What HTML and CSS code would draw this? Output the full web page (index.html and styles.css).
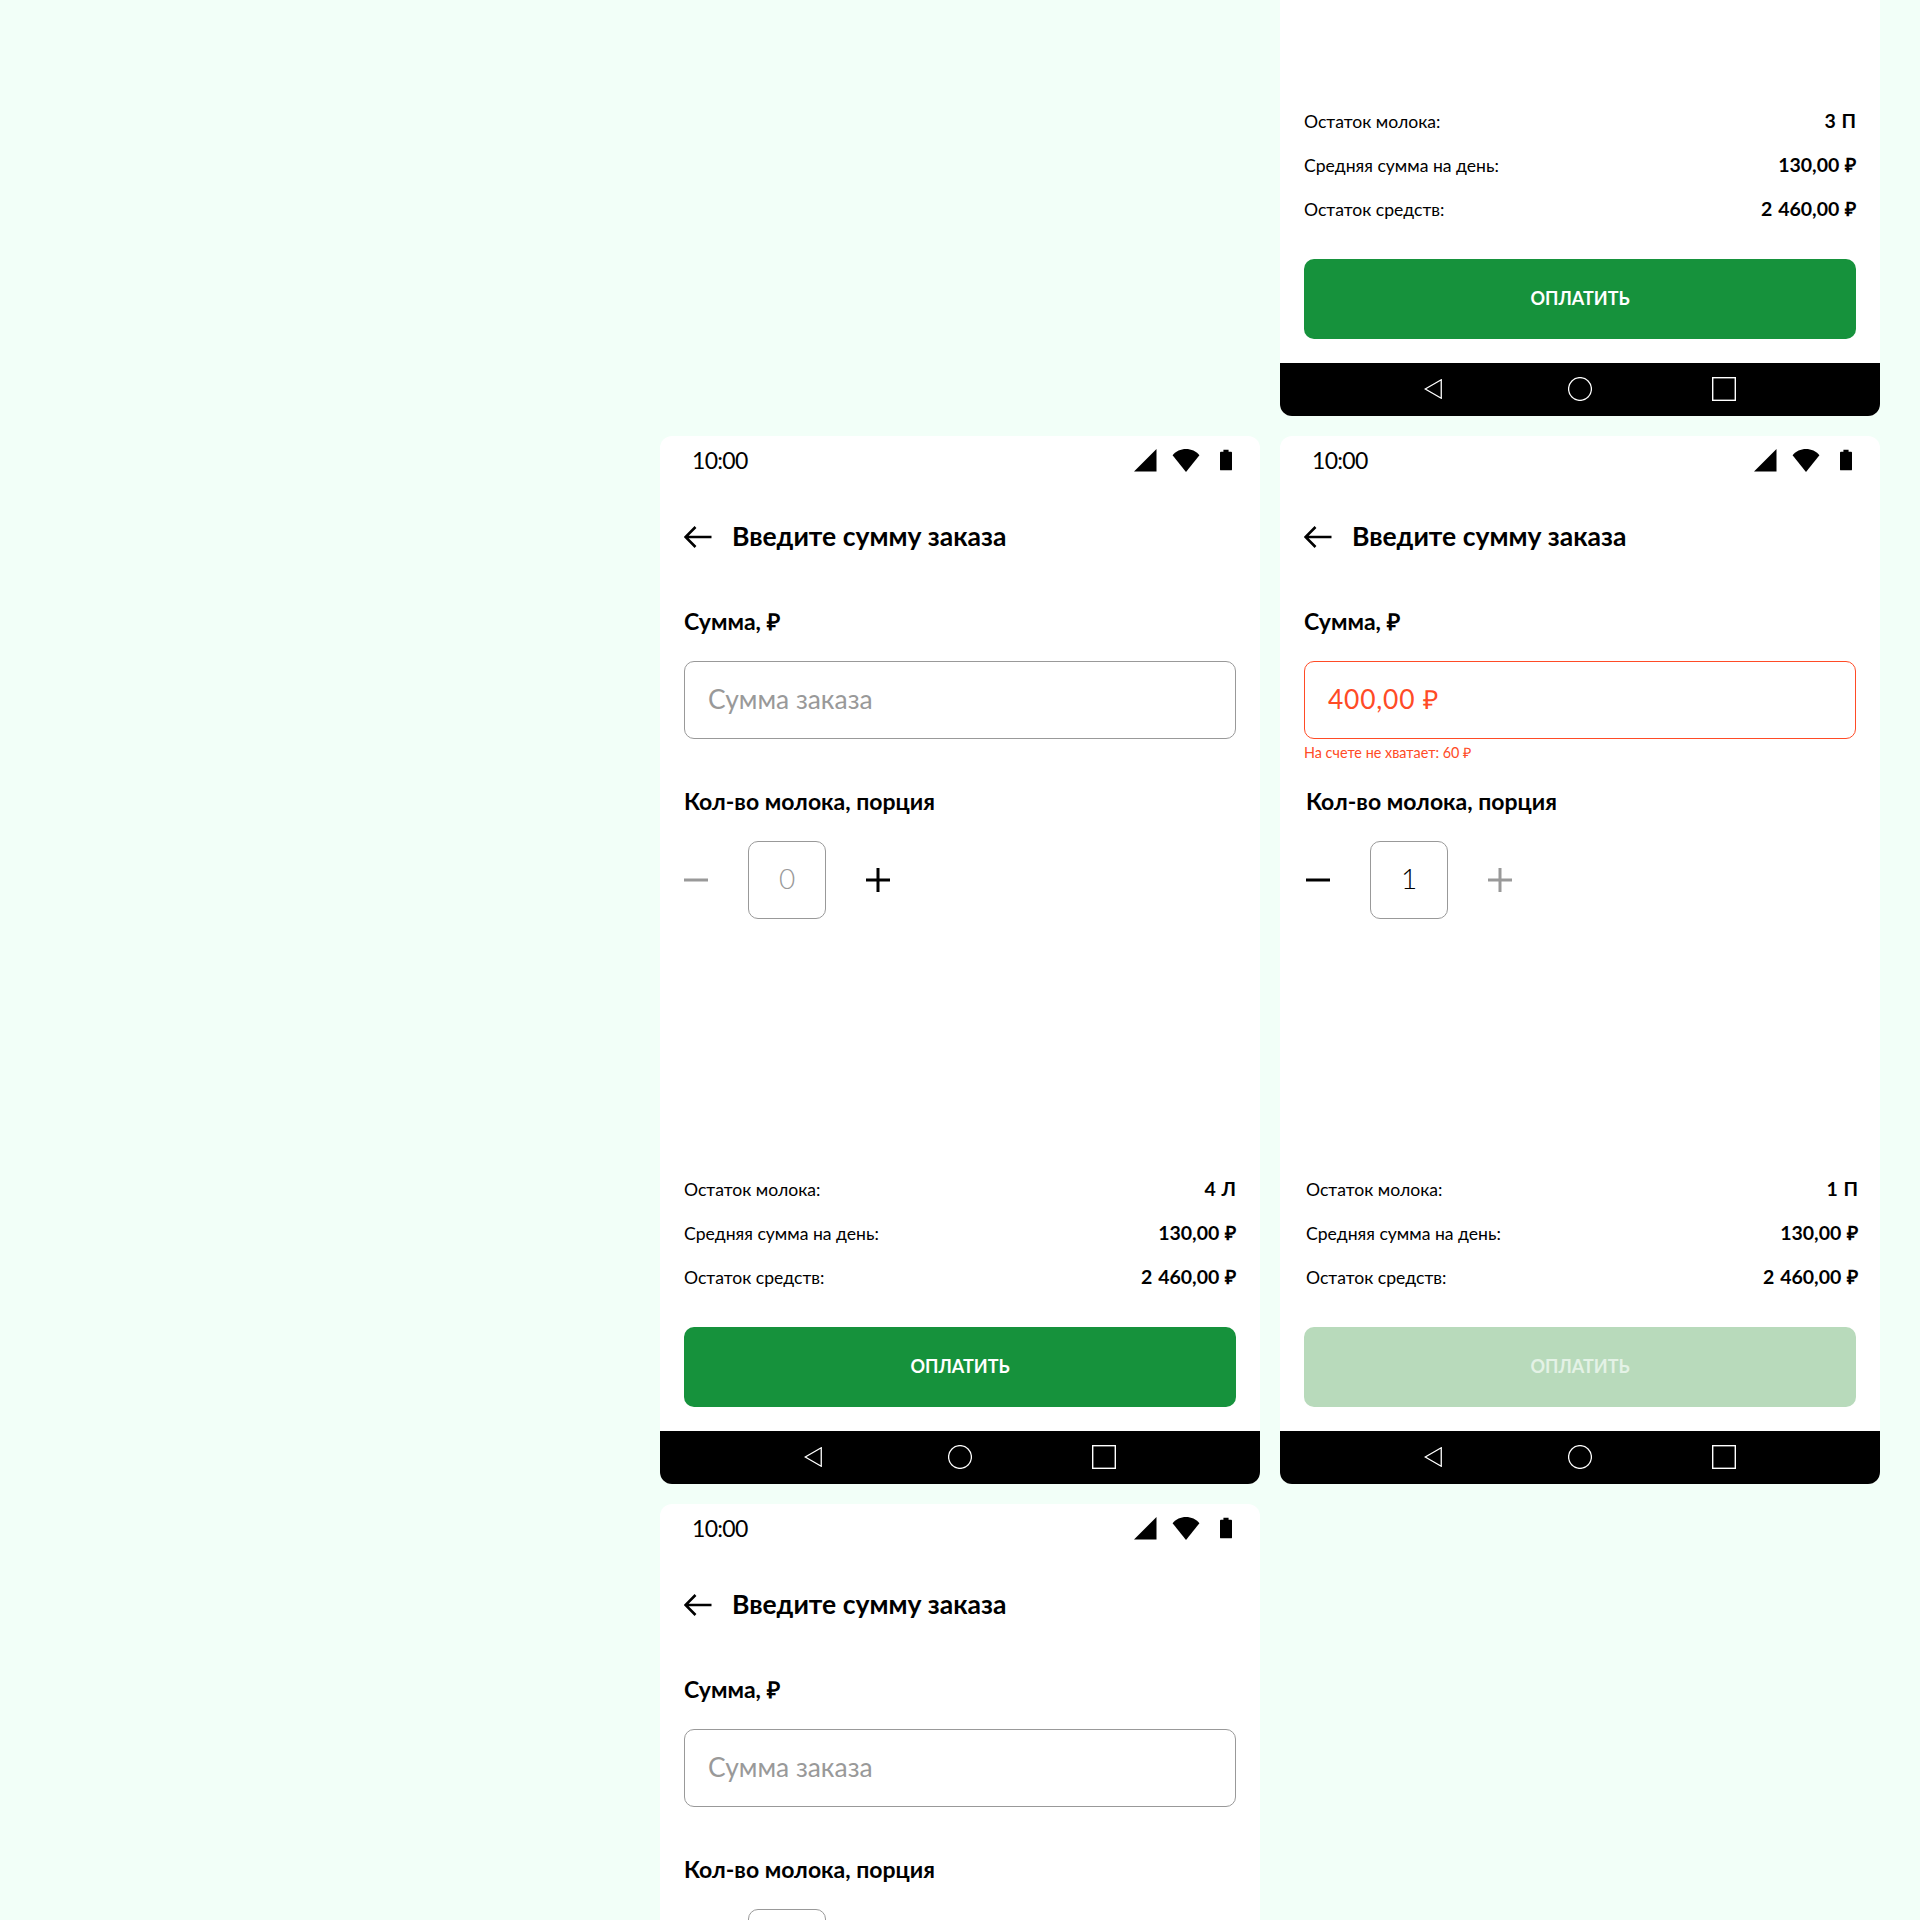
FILE: index.html
```html
<!DOCTYPE html>
<html lang="ru">

<head>
    <meta charset="UTF-8">
    <meta name="viewport" content="width=device-width, initial-scale=1.0">
    <title>Введите сумму заказа</title>
    <link rel="stylesheet" href="styles.css">
</head>

<body>
    <svg class="icon-sprite" width="0" height="0">
        <symbol id="i-signal" viewBox="0 0 24 24"><path d="M0 23.5 23.5 0v23.5z" /></symbol>
        <symbol id="i-wifi" viewBox="0 0 28 24"><path d="M0 6.5C3.5 2.3 8.500 0 14 0s10.500 2.300 14 6.500L14 24z" /></symbol>
        <symbol id="i-battery" viewBox="0 0 14 24"><path d="M4 0h6v2.500h3a1 1 0 0 1 1 1V23a1 1 0 0 1-1 1H1a1 1 0 0 1-1-1V3.500a1 1 0 0 1 1-1h3z" /></symbol>
        <symbol id="i-back" viewBox="0 0 28 24"><path d="M27.500 12H1.500M11.500 2 1.500 12l10 10" fill="none" stroke="currentColor" stroke-width="2.600" /></symbol>
        <symbol id="i-minus" viewBox="0 0 24 24"><path d="M0 12h24" fill="none" stroke="currentColor" stroke-width="3" /></symbol>
        <symbol id="i-plus" viewBox="0 0 24 24"><path d="M0 12h24M12 0v24" fill="none" stroke="currentColor" stroke-width="3" /></symbol>
        <symbol id="i-nav-back" viewBox="0 0 18 20"><path d="M17.250 .8 1.200 10l16.050 9.200z" fill="none" stroke="#fff" stroke-width="1.300" /></symbol>
        <symbol id="i-nav-home" viewBox="0 0 24 24"><circle cx="12" cy="12" r="11.400" fill="none" stroke="#fff" stroke-width="1.300" /></symbol>
        <symbol id="i-nav-recent" viewBox="0 0 24 24"><rect x=".7" y=".7" width="22.600" height="22.600" fill="none" stroke="#fff" stroke-width="1.400" /></symbol>
    </svg>

    <div class="board">
        <!-- top one is cut off by the window, only its lower part shows -->
        <div class="phone phone-second">
            <div class="screen">
                <div class="summary">
                    <div class="summary-row"><span>Остаток молока:</span><b>3 П</b></div>
                    <div class="summary-row"><span>Средняя сумма на день:</span><b>130,00 ₽</b></div>
                    <div class="summary-row"><span>Остаток средств:</span><b>2 460,00 ₽</b></div>
                </div>
                <button class="pay-button">ОПЛАТИТЬ</button>
            </div>
            <div class="nav-bar">
                <svg class="ic-nav-back"><use href="#i-nav-back" /></svg>
                <svg class="ic-nav"><use href="#i-nav-home" /></svg>
                <svg class="ic-nav"><use href="#i-nav-recent" /></svg>
            </div>
        </div>

        <div class="phone phone-first">
            <div class="status-bar">
                <span class="time">10:00</span>
                <div class="status-icons">
                    <svg class="ic-signal"><use href="#i-signal" /></svg>
                    <svg class="ic-wifi"><use href="#i-wifi" /></svg>
                    <svg class="ic-battery"><use href="#i-battery" /></svg>
                </div>
            </div>
            <div class="screen">
                <div class="title-row">
                    <svg class="ic-back"><use href="#i-back" /></svg>
                    <h1 class="title">Введите сумму заказа</h1>
                </div>
                <div class="label">Сумма, ₽</div>
                <div class="field placeholder">Сумма заказа</div>
                <div class="field-note"></div>
                <div class="label">Кол-во молока, порция</div>
                <div class="stepper">
                    <svg class="step-btn muted"><use href="#i-minus" /></svg>
                    <div class="step-value muted">0</div>
                    <svg class="step-btn"><use href="#i-plus" /></svg>
                </div>
                <div class="summary">
                    <div class="summary-row"><span>Остаток молока:</span><b>4 Л</b></div>
                    <div class="summary-row"><span>Средняя сумма на день:</span><b>130,00 ₽</b></div>
                    <div class="summary-row"><span>Остаток средств:</span><b>2 460,00 ₽</b></div>
                </div>
                <button class="pay-button">ОПЛАТИТЬ</button>
            </div>
            <div class="nav-bar">
                <svg class="ic-nav-back"><use href="#i-nav-back" /></svg>
                <svg class="ic-nav"><use href="#i-nav-home" /></svg>
                <svg class="ic-nav"><use href="#i-nav-recent" /></svg>
            </div>
        </div>

        <div class="phone phone-second">
            <div class="status-bar">
                <span class="time">10:00</span>
                <div class="status-icons">
                    <svg class="ic-signal"><use href="#i-signal" /></svg>
                    <svg class="ic-wifi"><use href="#i-wifi" /></svg>
                    <svg class="ic-battery"><use href="#i-battery" /></svg>
                </div>
            </div>
            <div class="screen">
                <div class="title-row">
                    <svg class="ic-back"><use href="#i-back" /></svg>
                    <h1 class="title">Введите сумму заказа</h1>
                </div>
                <div class="label">Сумма, ₽</div>
                <div class="field error">400,00 ₽</div>
                <div class="field-note error-note">На счете не хватает: 60 ₽</div>
                <div class="shifted">
                    <div class="label">Кол-во молока, порция</div>
                    <div class="stepper">
                        <svg class="step-btn"><use href="#i-minus" /></svg>
                        <div class="step-value">1</div>
                        <svg class="step-btn muted"><use href="#i-plus" /></svg>
                    </div>
                </div>
                <div class="summary shifted">
                    <div class="summary-row"><span>Остаток молока:</span><b>1 П</b></div>
                    <div class="summary-row"><span>Средняя сумма на день:</span><b>130,00 ₽</b></div>
                    <div class="summary-row"><span>Остаток средств:</span><b>2 460,00 ₽</b></div>
                </div>
                <button class="pay-button disabled">ОПЛАТИТЬ</button>
            </div>
            <div class="nav-bar">
                <svg class="ic-nav-back"><use href="#i-nav-back" /></svg>
                <svg class="ic-nav"><use href="#i-nav-home" /></svg>
                <svg class="ic-nav"><use href="#i-nav-recent" /></svg>
            </div>
        </div>

        <!-- bottom one runs off the window, the stepper box only just shows -->
        <div class="phone phone-first">
            <div class="status-bar">
                <span class="time">10:00</span>
                <div class="status-icons">
                    <svg class="ic-signal"><use href="#i-signal" /></svg>
                    <svg class="ic-wifi"><use href="#i-wifi" /></svg>
                    <svg class="ic-battery"><use href="#i-battery" /></svg>
                </div>
            </div>
            <div class="screen">
                <div class="title-row">
                    <svg class="ic-back"><use href="#i-back" /></svg>
                    <h1 class="title">Введите сумму заказа</h1>
                </div>
                <div class="label">Сумма, ₽</div>
                <div class="field placeholder">Сумма заказа</div>
                <div class="field-note"></div>
                <div class="label">Кол-во молока, порция</div>
                <div class="stepper">
                    <svg class="step-btn muted"><use href="#i-minus" /></svg>
                    <div class="step-value muted"></div>
                    <svg class="step-btn"><use href="#i-plus" /></svg>
                </div>
            </div>
        </div>
    </div>
</body>

</html>
```

FILE: styles.css
```css
html,
body {
    margin: 0;
    height: 1920px;
    overflow: hidden;
    background-color: #f2fff8;
}

body {
    font-family: "Lato", "Open Sans", sans-serif;
    color: #000;
}

.icon-sprite {
    display: block;
    height: 0;
}

.board {
    display: grid;
    grid-template-columns: 600px 600px;
    grid-auto-rows: 1048px;
    gap: 20px;
    padding-left: 660px;
    margin-top: -632px;
}

.phone {
    display: flex;
    flex-direction: column;
    background-color: #fff;
    border-radius: 12px;
    overflow: hidden;
}

.phone-first {
    grid-column: 1;
}

.phone-second {
    grid-column: 2;
}

.status-bar {
    display: flex;
    align-items: center;
    justify-content: space-between;
    height: 48px;
    padding: 0 28px 0 32px;
}

.time {
    font-size: 23px;
    letter-spacing: -.7px;
}

.status-icons {
    display: flex;
    align-items: center;
    gap: 15px;
}

.ic-signal {
    width: 23px;
    height: 23px;
}

.ic-wifi {
    width: 28px;
    height: 23px;
    margin-right: 5px;
}

.ic-battery {
    width: 12px;
    height: 22px;
}

.screen {
    flex: 1;
    display: flex;
    flex-direction: column;
    padding: 0 24px;
}

.title-row {
    display: flex;
    align-items: center;
    gap: 20px;
    height: 40px;
    margin-top: 32px;
}

.ic-back {
    width: 28px;
    height: 24px;
    margin-top: 1px;
}

.title {
    margin: 0;
    font-size: 26.500px;
    font-weight: 700;
}

.label {
    font-size: 23px;
    font-weight: 700;
    line-height: 28px;
}

.title-row + .label {
    margin-top: 51px;
}

.field {
    display: flex;
    align-items: center;
    box-sizing: border-box;
    height: 78px;
    margin-top: 26px;
    padding: 0 23px 3px;
    border: 1px solid #999;
    border-radius: 10px;
    font-size: 26.400px;
}

.placeholder {
    color: #999;
}

.error {
    color: #ff4b26;
    border-color: #ff4b26;
    letter-spacing: .8px;
}

.field-note {
    height: 48px;
    padding-top: 5px;
    box-sizing: border-box;
    font-size: 14.400px;
    line-height: 18px;
}

.error-note {
    color: #ff4b26;
}

.shifted {
    margin-left: 2px;
    margin-right: -2px;
}

.stepper {
    display: flex;
    align-items: center;
    height: 78px;
    margin-top: 26px;
}

.step-btn {
    width: 24px;
    height: 24px;
}

.step-value {
    display: flex;
    align-items: center;
    justify-content: center;
    box-sizing: border-box;
    width: 78px;
    height: 78px;
    margin: 0 40px;
    padding-bottom: 5px;
    border: 1px solid #999;
    border-radius: 10px;
    font-size: 28px;
    font-weight: 300;
}

.muted {
    color: #999;
}

.summary {
    display: flex;
    flex-direction: column;
    gap: 16px;
    margin-top: auto;
}

.summary-row {
    display: flex;
    align-items: center;
    justify-content: space-between;
    height: 28px;
    font-size: 17.600px;
}

.summary-row b {
    padding-bottom: 2px;
    font-size: 19.500px;
    font-weight: 700;
    word-spacing: 1px;
}

.pay-button {
    height: 80px;
    margin: 36px 0 24px;
    padding: 0 0 3px;
    border: none;
    border-radius: 10px;
    background-color: #16923c;
    color: #fff;
    font-family: inherit;
    font-size: 18px;
    font-weight: 700;
}

.pay-button.disabled {
    background-color: #b8dabb;
    color: #e4f2e6;
}

.nav-bar {
    display: flex;
    align-items: center;
    justify-content: center;
    gap: 120px;
    height: 53px;
    padding-bottom: 1px;
    box-sizing: border-box;
    background-color: #000;
}

.ic-nav-back {
    width: 18px;
    height: 20px;
    margin-right: 6px;
}

.ic-nav {
    width: 24px;
    height: 24px;
}
```
